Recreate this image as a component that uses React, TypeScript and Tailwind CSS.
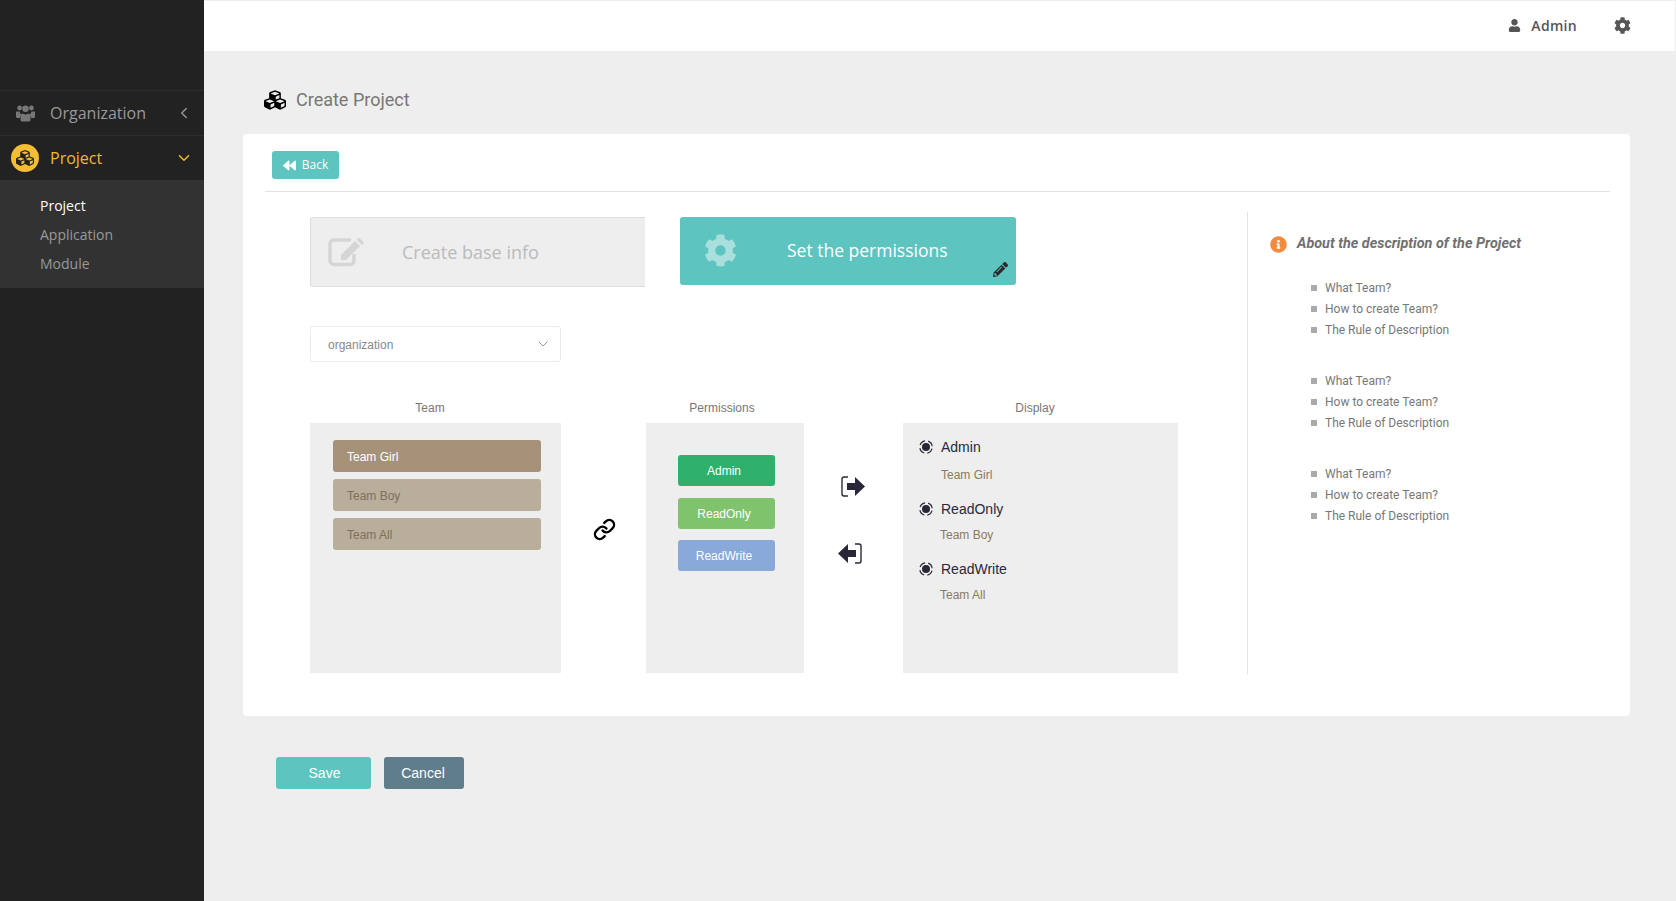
import React from 'react';
import { FaBackward, FaCog, FaCubes, FaInfoCircle, FaPencilAlt, FaUser } from 'react-icons/fa';
import { ChevronDown, ChevronLeft, Link } from 'lucide-react';

const teams = [
  { name: 'Team Girl', className: 'bg-[#a59278] text-white' },
  { name: 'Team Boy', className: 'bg-[#b9ad9b] text-[#7f7058]' },
  { name: 'Team All', className: 'bg-[#b9ad9b] text-[#7f7058]' },
];

const permissions = [
  { name: 'Admin', className: 'mt-[32px] h-[31px] bg-[#2fb16c]' },
  { name: 'ReadOnly', className: 'mt-[12px] h-[31px] bg-[#7fc36c]' },
  { name: 'ReadWrite', className: 'mt-[11px] h-[31px] bg-[#88a9d9]' },
];

const display = [
  { role: 'Admin', team: 'Team Girl', className: 'mt-[8px] pl-[22px]' },
  { role: 'ReadOnly', team: 'Team Boy', className: 'mt-[6px] pl-[21px]' },
  { role: 'ReadWrite', team: 'Team All', className: 'mt-[6px] pl-[21px]' },
];

const helpItems = ['What Team?', 'How to create Team?', 'The Rule of Description'];

const UsersIcon = () => (
  <svg width="19" height="17" viewBox="0 0 19 17" className="shrink-0 text-[#777777]" fill="currentColor">
    <circle cx="3.6" cy="3" r="2.4" />
    <circle cx="15.4" cy="3" r="2.4" />
    <circle cx="9.5" cy="3.8" r="3.3" />
    <path d="M0 6.500h3.600c.3 1.600 1 2.600 2 3.200-1 .8-1.600 2-1.600 3.300H1.500C.5 13 0 12.400 0 11.500z" />
    <path d="M19 6.500h-3.600c-.3 1.600-1 2.600-2 3.200 1 .8 1.600 2 1.600 3.300h2.500c1 0 1.500-.6 1.500-1.500z" />
    <path d="M6.700 8.500c1.600 1.300 4 1.300 5.600 0 1.500.3 2.200 1.800 2.200 4.200v2c0 1.200-.8 1.800-1.800 1.800H6.300c-1 0-1.800-.6-1.800-1.800v-2c0-2.400.7-3.900 2.200-4.200z" />
  </svg>
);

const EditIcon = () => (
  <svg width="37" height="30" viewBox="0 0 37 30" className="shrink-0 text-[#d5d5d5]" fill="none">
    <path d="M26 17v6.500a4 4 0 0 1-4 4H6a4 4 0 0 1-4-4V7a4 4 0 0 1 4-4h17" stroke="currentColor" strokeWidth="3.400" />
    <path d="M13 18 27 4l5 5-14 14h-5z" fill="currentColor" />
    <path d="M28.500 2.500 31 0.500l5 5-2 2.500z" fill="currentColor" />
  </svg>
);

const RingIcon = () => (
  <svg width="14" height="14" viewBox="0 0 14 14" className="shrink-0 text-[#2a2838]">
    <circle cx="7" cy="7" r="4" fill="currentColor" />
    <circle cx="7" cy="7" r="6.200" fill="none" stroke="currentColor" strokeWidth="1.200" strokeDasharray="6.500 3.200" strokeDashoffset="-1.600" />
  </svg>
);

const ExitIcon = () => (
  <svg width="24" height="21" viewBox="0 0 24 21" className="text-[#2a2838]">
    <path d="M7 1H3a2 2 0 0 0-2 2v15a2 2 0 0 0 2 2h4" fill="none" stroke="currentColor" strokeWidth="1.400" />
    <path d="M6 7h8V1l10 9.500L14 20v-6H6z" fill="currentColor" />
  </svg>
);

const EnterIcon = () => (
  <svg width="24" height="21" viewBox="0 0 24 21" className="text-[#2a2838]">
    <path d="M17 1h4a2 2 0 0 1 2 2v15a2 2 0 0 1-2 2h-4" fill="none" stroke="currentColor" strokeWidth="1.400" />
    <path d="M18 7h-8V1L0 10.500 10 20v-6h8z" fill="currentColor" />
  </svg>
);

const Sidebar = () => (
  <aside className="w-[204px] shrink-0 bg-[#222222] pt-[90px] font-['Open_Sans',sans-serif]">
    <div className="flex h-[45px] items-center border-t border-[#2c2c2c] pl-[16px] pr-[11px] text-[16px] text-[#999999]">
      <UsersIcon />
      <span className="ml-[15px] flex-1">Organization</span>
      <ChevronLeft size={18} strokeWidth={1.800} />
    </div>
    <div className="flex h-[45px] items-center border-t border-[#2c2c2c] pl-[11px] pr-[11px] text-[16px] text-[#f4b82f]">
      <span className="flex h-[28px] w-[28px] items-center justify-center rounded-full bg-[#f4bd33]">
        <FaCubes className="text-[18px] text-[#222222]" />
      </span>
      <span className="ml-[11px] flex-1">Project</span>
      <ChevronDown size={18} strokeWidth={2} />
    </div>
    <div className="flex h-[108px] flex-col justify-center bg-[#323232] pl-[40px] text-[14px] leading-[29px] text-[#999999]">
      <span className="text-white">Project</span>
      <span>Application</span>
      <span>Module</span>
    </div>
  </aside>
);

const App: React.FC = () => {
  return (
    <div className="flex min-h-[901px] w-[1676px] overflow-hidden bg-[#eeeeee]">
      <Sidebar />
      <main className="flex-1">
        <header className="mr-px mt-px flex h-[50px] items-center justify-end bg-white pb-[2px] pr-[44px] font-['Open_Sans',sans-serif] text-[#555555]">
          <FaUser className="text-[13px]" />
          <span className="ml-[10px] text-[14px] font-semibold tracking-[0.3px]">Admin</span>
          <FaCog className="ml-[37px] text-[17px]" />
        </header>

        <div className="flex h-[83px] items-center pl-[60px] pt-[14px]">
          <FaCubes className="text-[22px] text-black" />
          <h1 className="ml-[10px] font-['Roboto',sans-serif] text-[18px] font-normal text-[#777777]">Create Project</h1>
        </div>

        <section className="ml-[39px] mr-[46px] h-[582px] rounded-[4px] bg-white pl-[22px] pr-[20px]">
          <div className="flex h-[58px] items-start border-b border-[#e3e3e3] pl-[7px] pt-[17px]">
            <button className="flex h-[28px] w-[67px] items-center justify-center rounded-[3px] bg-[#5dc4bf] font-['Open_Sans',sans-serif] text-[12px] text-white">
              <FaBackward className="mr-[6px] text-[13px]" />
              Back
            </button>
          </div>

          <div className="mt-[20px] flex">
            <div className="h-[462px] w-[983px] border-r border-[#e3e3e3] pl-[45px] pt-[5px]">
              <div className="flex items-start">
                <div className="flex h-[70px] w-[335px] items-center rounded-l-[3px] border border-r-0 border-[#dddddd] bg-[#eeeeee] pl-[17px] font-['Open_Sans',sans-serif] text-[#bbbbbb]">
                  <EditIcon />
                  <span className="ml-[37px] text-[18px]">Create base info</span>
                </div>
                <div className="relative ml-[35px] flex h-[68px] w-[336px] items-center rounded-[3px] bg-[#5dc4bf] pb-[2px] pl-[24px] font-['Open_Sans',sans-serif] text-white">
                  <FaCog className="text-[33px] text-[#a9dfdc]" />
                  <span className="ml-[50px] text-[17.500px]">Set the permissions</span>
                  <FaPencilAlt className="absolute bottom-[8px] right-[8px] text-[15px] text-[#2b2b2b]" />
                </div>
              </div>

              <div className="mt-[39px] flex h-[36px] w-[251px] items-center justify-between rounded-[3px] border border-[#ebebeb] bg-white pl-[17px] pr-[9px] font-['Liberation_Sans',sans-serif] text-[12px] text-[#888888]">
                <span className="pt-[2px]">organization</span>
                <ChevronDown size={16} strokeWidth={1.300} />
              </div>

              <div className="mt-[36px] flex font-['Liberation_Sans',sans-serif] text-[12px]">
                <div className="w-[251px]">
                  <div className="h-[25px] pr-[11px] pt-[1px] text-center leading-[18px] text-[#777777]">Team</div>
                  <div className="flex h-[250px] flex-col gap-[7px] bg-[#eeeeee] pl-[23px] pr-[20px] pt-[17px]">
                    {teams.map(team => (
                      <div key={team.name} className={`flex h-[32px] items-center rounded-[3px] pl-[14px] pt-[2px] ${team.className}`}>
                        {team.name}
                      </div>
                    ))}
                  </div>
                </div>

                <div className="flex w-[85px] items-start justify-center pl-[2px] pt-[120px]">
                  <Link size={23} strokeWidth={2.500} className="text-black" />
                </div>

                <div className="w-[158px]">
                  <div className="h-[25px] pr-[6px] pt-[1px] text-center leading-[18px] text-[#777777]">Permissions</div>
                  <div className="flex h-[250px] flex-col bg-[#eeeeee] pl-[32px] pr-[29px]">
                    {permissions.map(permission => (
                      <div key={permission.name} className={`flex items-center justify-center rounded-[3px] pr-[5px] text-white ${permission.className}`}>
                        {permission.name}
                      </div>
                    ))}
                  </div>
                </div>

                <div className="flex w-[99px] flex-col items-center gap-[46px] pt-[78px]">
                  <div className="mr-[1px]"><ExitIcon /></div>
                  <div className="mr-[7px]"><EnterIcon /></div>
                </div>

                <div className="w-[275px]">
                  <div className="h-[25px] pr-[11px] pt-[1px] text-center leading-[18px] text-[#777777]">Display</div>
                  <div className="h-[250px] bg-[#eeeeee] pl-[16px] pt-[14px]">
                    {display.map(item => (
                      <div key={item.role} className="mb-[14px]">
                        <div className="flex h-[20px] items-center gap-[8px] text-[14px] text-[#2a2838]">
                          <RingIcon />
                          {item.role}
                        </div>
                        <div className={`h-[20px] leading-[20px] text-[#8a7a60] ${item.className}`}>{item.team}</div>
                      </div>
                    ))}
                  </div>
                </div>
              </div>
            </div>

            <aside className="flex-1 pl-[22px] pt-[22px] font-['Roboto',sans-serif]">
              <div className="flex h-[20px] items-center">
                <FaInfoCircle className="text-[17px] text-[#f28c3c]" />
                <span className="ml-[10px] text-[14.400px] font-bold italic text-[#707070]">About the description of the Project</span>
              </div>
              <div className="mt-[23px] flex flex-col gap-[30px] pl-[41px]">
                {[0, 1, 2].map(group => (
                  <ul key={group}>
                    {helpItems.map(item => (
                      <li key={item} className="flex h-[21px] items-center text-[12px] text-[#777777]">
                        <span className="mr-[8px] h-[6px] w-[6px] bg-[#aaaaaa]" />
                        {item}
                      </li>
                    ))}
                  </ul>
                ))}
              </div>
            </aside>
          </div>
        </section>

        <div className="ml-[72px] mt-[41px] flex gap-[13px] font-['Liberation_Sans',sans-serif] text-[14px] text-white">
          <button className="h-[32px] w-[95px] rounded-[3px] bg-[#5dc4bf] pl-[2px] pt-[1px]">Save</button>
          <button className="h-[32px] w-[80px] rounded-[3px] bg-[#607d8b] pr-[2px]">Cancel</button>
        </div>
      </main>
    </div>
  );
};

export default App;
